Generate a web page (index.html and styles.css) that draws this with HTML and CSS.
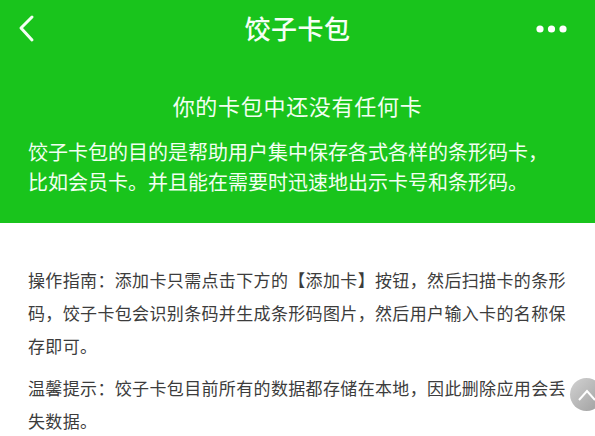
FILE: index.html
```html
<!DOCTYPE html>
<html lang="zh-CN">
<head>
<meta charset="utf-8">
<title>饺子卡包</title>
<link rel="stylesheet" href="styles.css">
</head>
<body>
<section class="hero">
  <header class="nav">
    <svg class="back" width="20" height="30" viewBox="0 0 20 30"><path d="M14 3 L3 14 L14 26" fill="none" stroke="#f4fff4" stroke-width="3" stroke-linecap="round" stroke-linejoin="round"/></svg>
    <h1 class="title">饺子卡包</h1>
    <svg class="more" width="34" height="10" viewBox="0 0 34 10"><circle cx="5" cy="5" r="3.6" fill="#fff"/><circle cx="16.5" cy="5" r="3.6" fill="#fff"/><circle cx="28" cy="5" r="3.6" fill="#fff"/></svg>
  </header>
  <div class="empty">
    <h2 class="empty-title">你的卡包中还没有任何卡</h2>
    <p class="empty-desc">饺子卡包的目的是帮助用户集中保存各式各样的条形码卡，比如会员卡。并且能在需要时迅速地出示卡号和条形码。</p>
  </div>
</section>
<main class="guide">
  <p class="guide-text">操作指南：添加卡只需点击下方的【添加卡】按钮，然后扫描卡的条形码，饺子卡包会识别条码并生成条形码图片，然后用户输入卡的名称保存即可。</p>
  <p class="guide-text">温馨提示：饺子卡包目前所有的数据都存储在本地，因此删除应用会丢失数据。</p>
</main>
<button class="to-top" aria-label="回到顶部">
  <svg width="20" height="14" viewBox="0 0 20 14"><path d="M2 12 L10 3 L18 12" fill="none" stroke="#fff" stroke-width="2"/></svg>
</button>
</body>
</html>
```
FILE: styles.css
```css
html, body {
  margin: 0;
  padding: 0;
  background: #ffffff;
  font-family: "Noto Sans CJK SC", "Noto Sans", sans-serif;
  overflow: hidden;
}

.hero {
  background: #19c41c;
  height: 223px;
  color: #f2fff2;
}

.nav {
  height: 56px;
  display: flex;
  align-items: center;
  justify-content: space-between;
  padding: 0 26px 0 18px;
  position: relative;
}

.back {
  display: block;
  margin-top: 1px;
}

.title {
  position: absolute;
  left: 0;
  right: 0;
  top: 0;
  margin: 0;
  text-align: center;
  font-size: 26px;
  font-weight: 500;
  line-height: 56px;
  letter-spacing: 0.5px;
  color: #f6fff6;
  pointer-events: none;
}

.more {
  display: block;
  margin-top: 2px;
}

.empty {
  padding: 34px 32px 0 28px;
}

.empty-title {
  margin: 0;
  text-align: center;
  font-size: 22px;
  font-weight: 400;
  line-height: 30px;
  letter-spacing: 0.7px;
  padding-left: 4px;
}

.empty-desc {
  margin: 17px 0 0;
  font-size: 20px;
  line-height: 30px;
  letter-spacing: 0;
}

.guide {
  padding: 40px 19px 0 28px;
}

.guide-text {
  margin: 0 0 9px;
  font-size: 17px;
  line-height: 33px;
  letter-spacing: 0.35px;
  color: #3c3c3c;
}

.to-top {
  position: absolute;
  left: 570px;
  top: 378px;
  width: 33px;
  height: 33px;
  border: none;
  border-radius: 50%;
  padding: 0;
  background: linear-gradient(135deg, #d2d2d2, #9e9e9e);
  display: flex;
  align-items: center;
  justify-content: center;
}
```
